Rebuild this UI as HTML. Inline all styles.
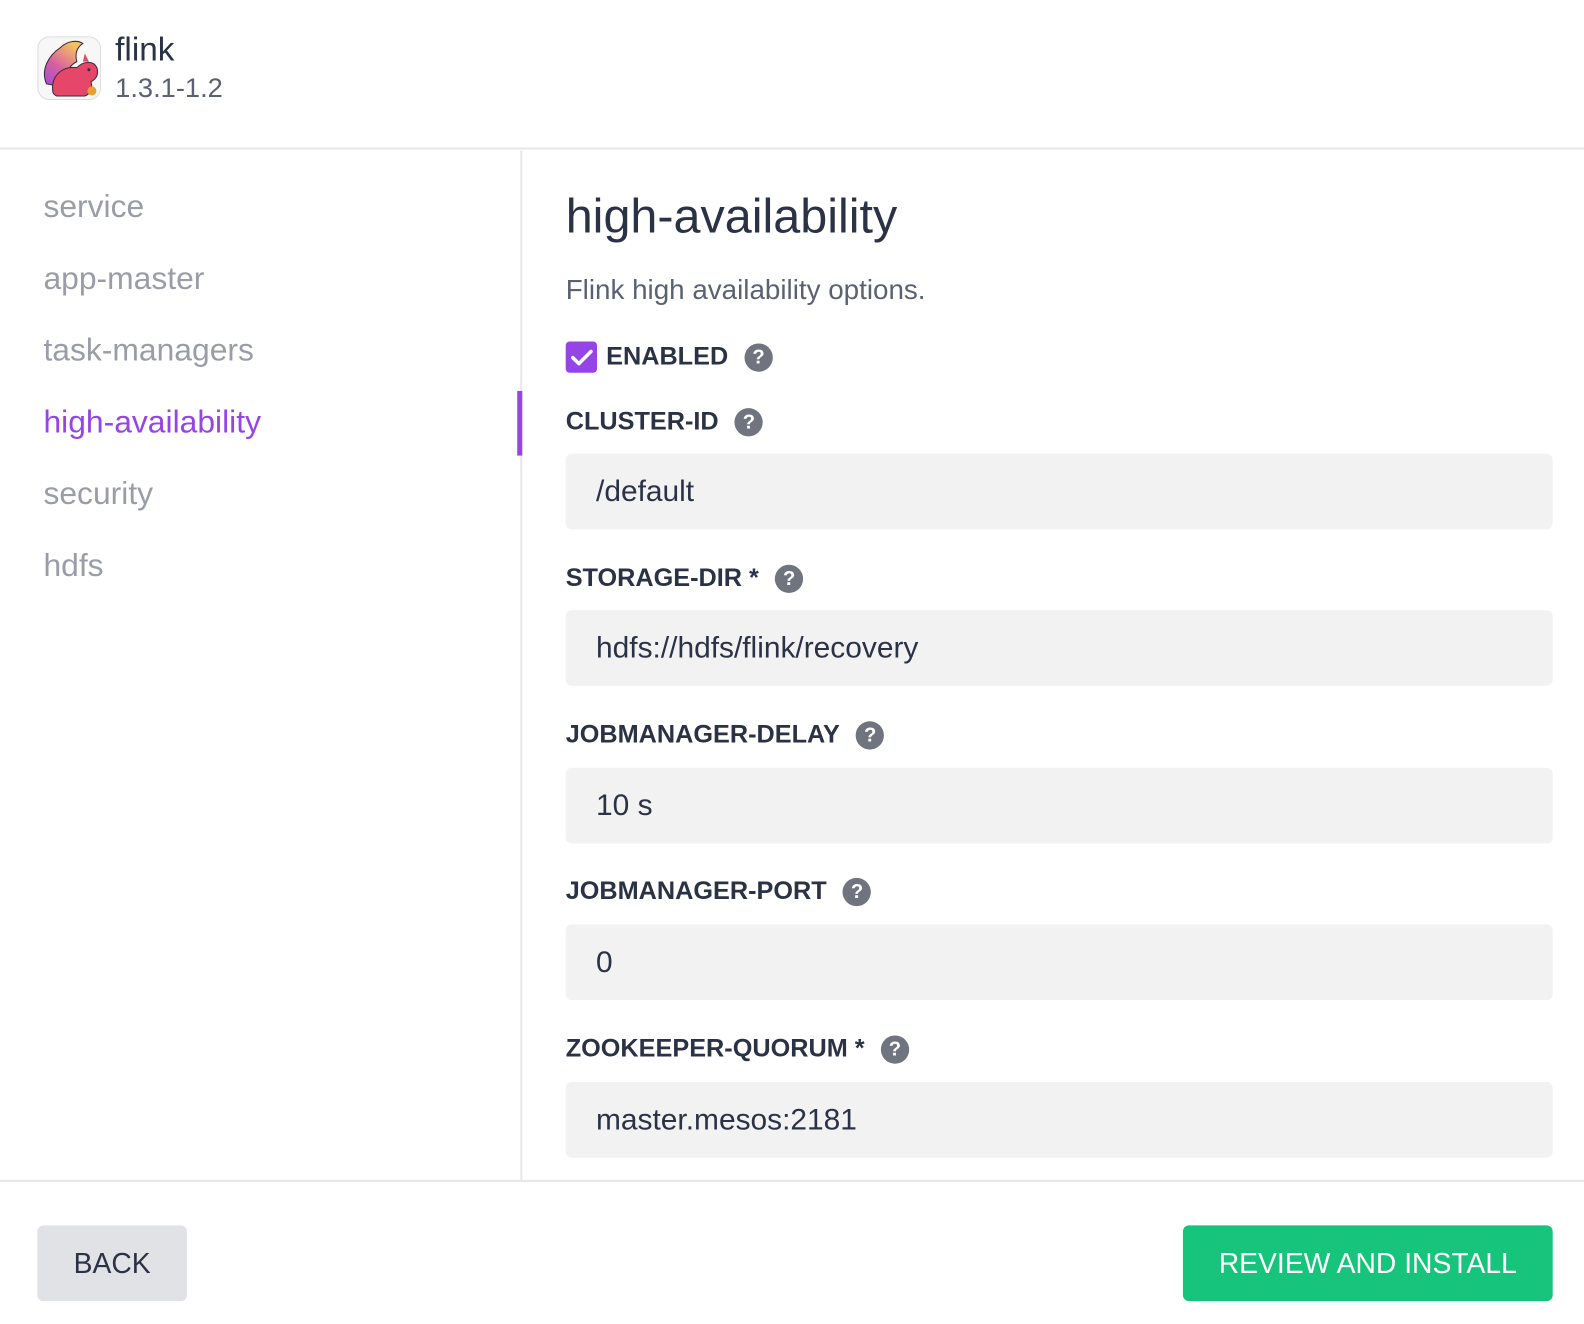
<!DOCTYPE html>
<html><head><meta charset="utf-8"><style>
*{box-sizing:border-box;margin:0;padding:0}
html,body{width:1584px;height:1324px;overflow:hidden;background:#fff}
body{font-family:"Liberation Sans",sans-serif;color:#2b3245;position:relative}
#w{position:absolute;left:0;top:0;width:1568px;height:1311px;transform:scale(1.0102);transform-origin:0 0}
.hdr{position:absolute;left:0;top:0;width:1568px;height:148px;border-bottom:2px solid #e6e7ea}
.logo{position:absolute;left:37px;top:36px;width:63px;height:63px;border-radius:12px;border:1px solid #ddd;overflow:hidden;background:#f7f7f7}
.t1{position:absolute;left:114px;top:30px;font-size:33px;color:#2b3245}
.t2{position:absolute;left:114px;top:72px;font-size:27px;color:#5b6173}
.side{position:absolute;left:0;top:149px;width:517px;height:1021px;border-right:2px solid #e6e7ea}
.nav{position:absolute;left:43px;font-size:31.5px;color:#9a9da8}
.nav.a{color:#9545e5}
.bar{position:absolute;left:512px;top:387px;width:5px;height:64px;background:#9545e5}
h1{position:absolute;left:560px;top:187px;font-size:48px;font-weight:400;color:#2b3245}
.desc{position:absolute;left:560px;top:271px;font-size:27.5px;color:#5b6173}
.lbl{position:absolute;left:560px;font-size:25px;font-weight:700;color:#2b3245;display:flex;align-items:center}
.q{display:inline-block;width:28px;height:28px;border-radius:50%;background:#70747f;color:#fff;font-size:20px;font-weight:700;text-align:center;line-height:28px;margin-left:16px}
.inp{position:absolute;left:560px;width:977px;height:75px;background:#f2f2f2;border-radius:6px;font-size:29.6px;color:#2b3245;padding-left:30px;line-height:75px}
.chk{width:31px;height:31px;background:#9545e5;border-radius:4px;margin-right:9px;display:flex;align-items:center;justify-content:center}
.foot{position:absolute;left:0;top:1168px;width:1568px;border-top:2px solid #e6e7ea}
.back{position:absolute;left:37px;top:1213px;width:148px;height:75px;background:#e1e2e6;border-radius:6px;font-size:28px;line-height:75px;text-align:center;color:#2b3245}
.rev{position:absolute;left:1171px;top:1213px;width:366px;height:75px;background:#17c47b;border-radius:6px;font-size:28px;line-height:75px;text-align:center;color:#fff}
</style></head><body><div id="w">
<div class="hdr">
<div class="logo"><svg width="63" height="63" viewBox="0 0 63 63">
<defs><linearGradient id="g" x1="0" y1="1" x2="0.6" y2="0"><stop offset="0" stop-color="#9a4cd8"/><stop offset="0.5" stop-color="#d860a0"/><stop offset="1" stop-color="#f4c060"/></linearGradient></defs>
<path d="M8 46 C2 32 10 18 22 10 C28 4 38 2 44 6 C38 10 36 16 38 24 C30 28 26 36 28 50 Z" fill="url(#g)" stroke="#3a2a3a" stroke-width="1"/>
<path d="M14 50 C14 36 26 28 38 30 C44 24 54 22 58 30 C60 38 56 42 52 44 C54 50 52 56 46 58 L18 58 C14 56 14 54 14 50 Z" fill="#e6466a" stroke="#3a2a3a" stroke-width="1"/>
<path d="M44 24 L46 16 L50 24 Z" fill="#e6466a"/>
<circle cx="50" cy="32" r="1.5" fill="#333"/>
<circle cx="53" cy="53" r="4.5" fill="#e8a030"/>
</svg></div>
<div class="t1">flink</div><div class="t2">1.3.1-1.2</div>
</div>
<div class="side">
<div class="nav" style="top:37px">service</div>
<div class="nav" style="top:108px">app-master</div>
<div class="nav" style="top:179px">task-managers</div>
<div class="nav a" style="top:250px">high-availability</div>
<div class="nav" style="top:321px">security</div>
<div class="nav" style="top:392px">hdfs</div>
</div>
<div class="bar"></div>
<h1>high-availability</h1>
<div class="desc">Flink high availability options.</div>
<div class="lbl" style="top:338px"><span class="chk"><svg width="22" height="18" viewBox="0 0 22 18"><path d="M2 9 L8 15 L20 3" stroke="#fff" stroke-width="3.5" fill="none" stroke-linecap="round" stroke-linejoin="round"/></svg></span>ENABLED<span class="q">?</span></div>
<div class="lbl" style="top:403px">CLUSTER-ID<span class="q">?</span></div>
<div class="inp" style="top:449px">/default</div>
<div class="lbl" style="top:558px">STORAGE-DIR *<span class="q">?</span></div>
<div class="inp" style="top:604px">hdfs://hdfs/flink/recovery</div>
<div class="lbl" style="top:713px">JOBMANAGER-DELAY<span class="q">?</span></div>
<div class="inp" style="top:760px">10 s</div>
<div class="lbl" style="top:868px">JOBMANAGER-PORT<span class="q">?</span></div>
<div class="inp" style="top:915px">0</div>
<div class="lbl" style="top:1024px">ZOOKEEPER-QUORUM *<span class="q">?</span></div>
<div class="inp" style="top:1071px">master.mesos:2181</div>
<div class="foot"></div>
<div class="back">BACK</div>
<div class="rev">REVIEW AND INSTALL</div>
</div></body></html>
